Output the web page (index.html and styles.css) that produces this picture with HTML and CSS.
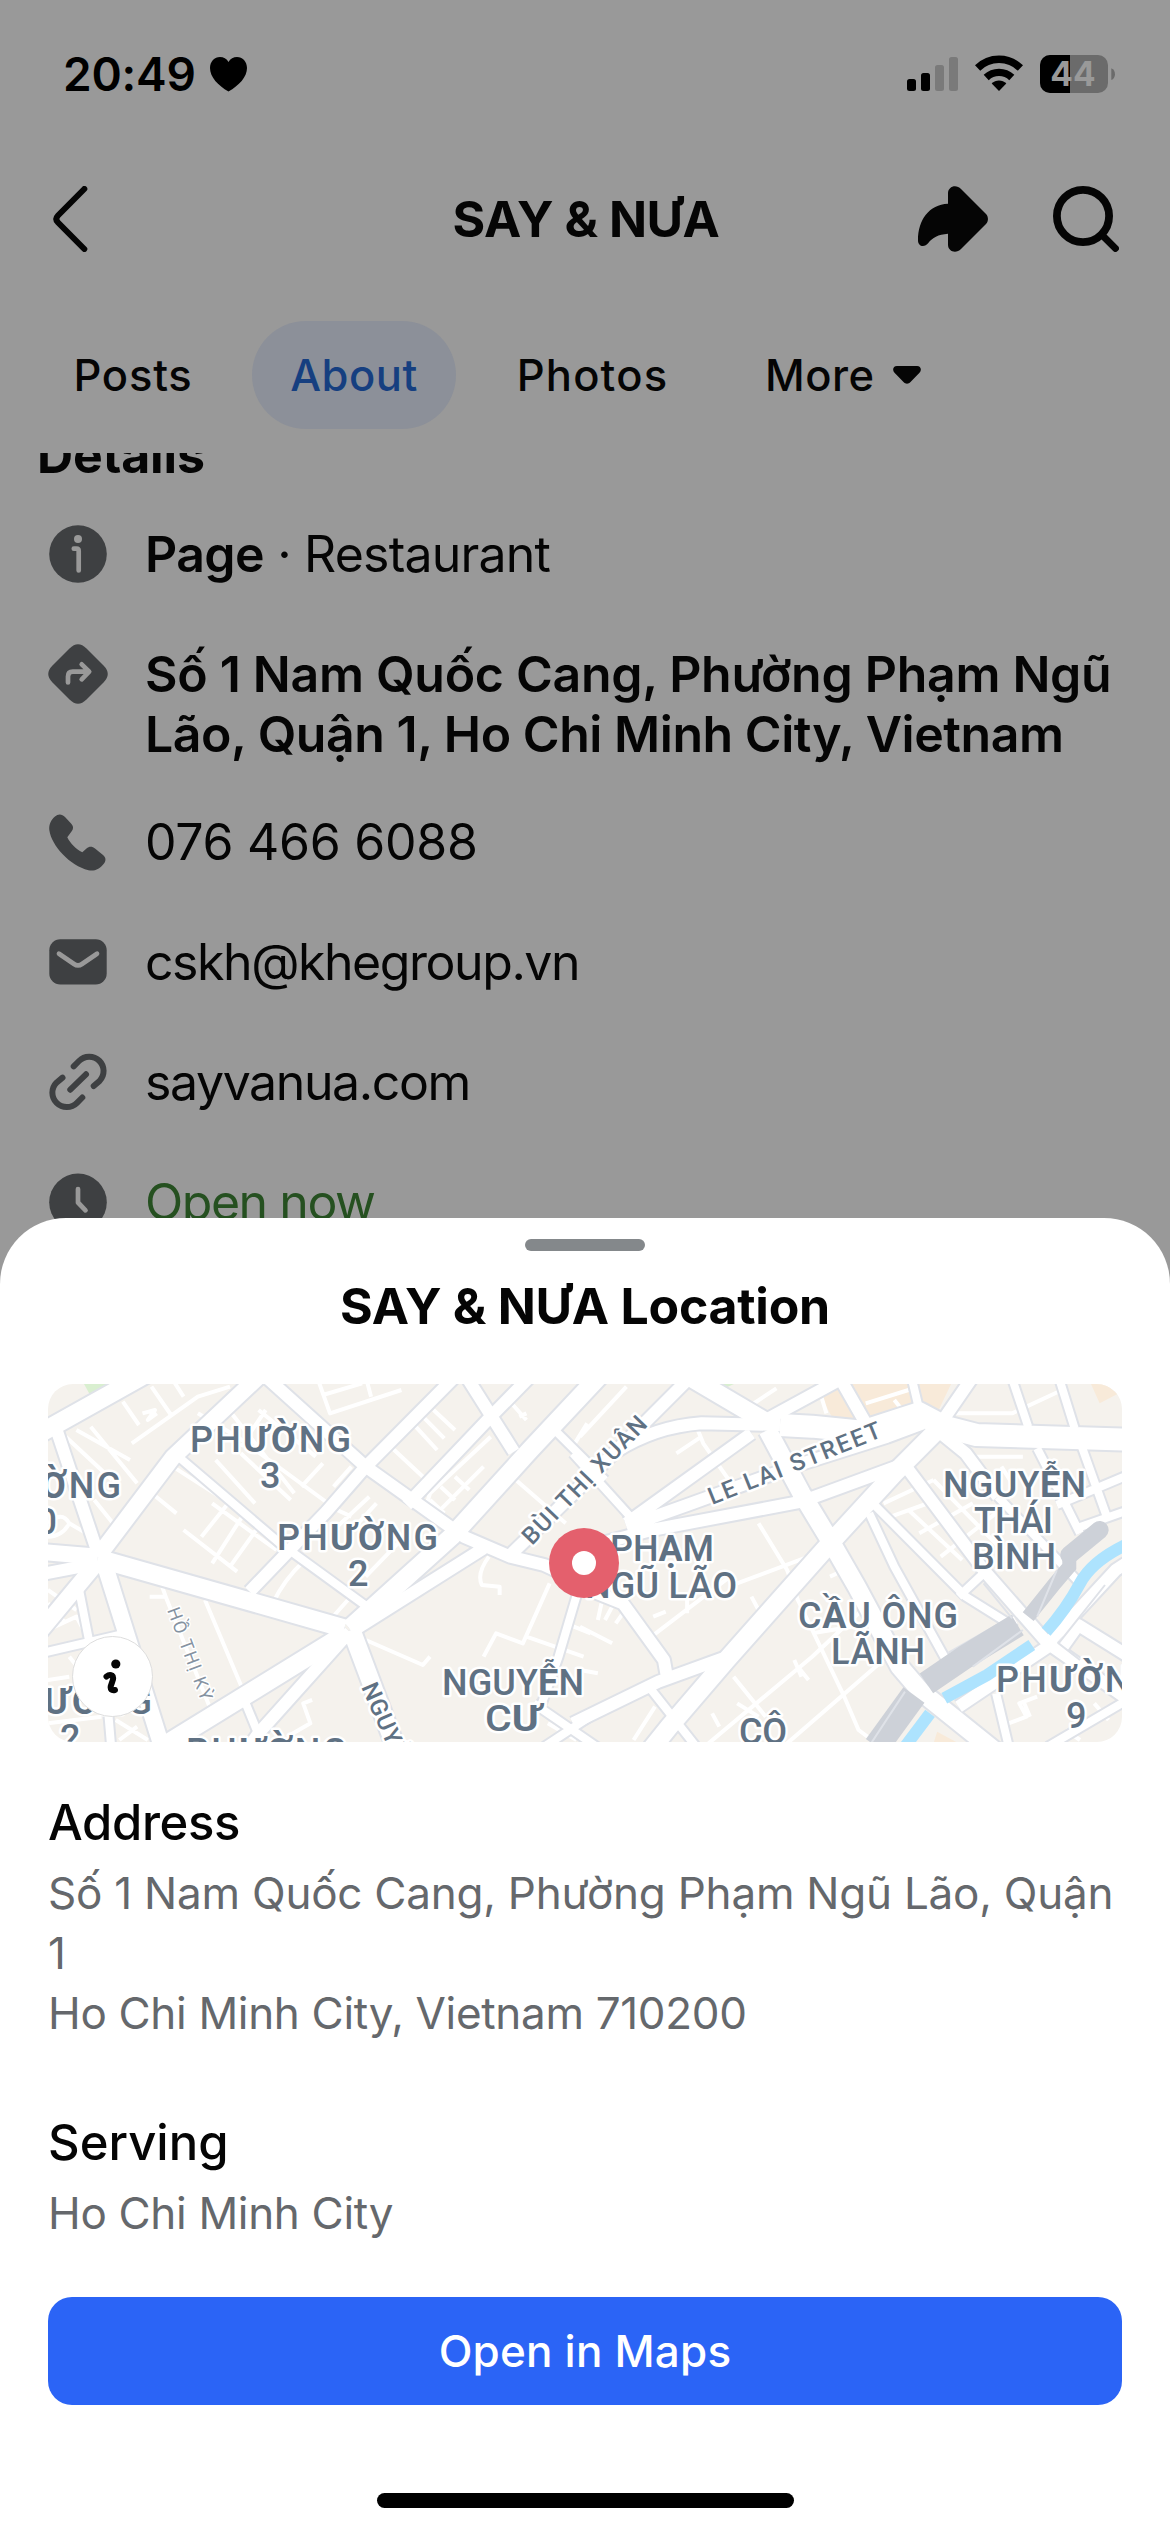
FILE: index.html
```html
<!DOCTYPE html>
<html lang="en">
<head>
<meta charset="utf-8">
<title>SAY &amp; NƯA</title>
<link rel="stylesheet" href="styles.css">
</head>
<body>
<div class="screen">
  <div class="page">
    <div class="status">
      <div class="status-left">
        <span class="time">20:49</span>
        <svg width="37" height="35" viewBox="0 0 37 35"><path d="M18.5 34.5C8 28.500 0 20 0 11C0 4.500 4.500 0 10 0C13.500 0 16.700 1.800 18.500 5C20.300 1.800 23.500 0 27 0C32.500 0 37 4.500 37 11C37 20 29 28.500 18.500 34.500Z"/></svg>
      </div>
      <div class="status-right">
        <svg width="51" height="38" viewBox="0 0 51 38"><rect y="24" width="9" height="12" rx="2.500"/><rect x="14" y="18" width="9" height="18" rx="2.500"/><rect x="28" y="10" width="9" height="26" rx="2.500" fill="#7a7a7a"/><rect x="42" y="2" width="9" height="34" rx="2.500" fill="#7a7a7a"/></svg>
        <svg width="48" height="38" viewBox="0 0 48 38"><path d="M2.600 13A30.500 30.500 0 0 1 45.400 13" fill="none" stroke="#000" stroke-width="7.500"/><path d="M11.200 22.500A18.500 18.500 0 0 1 36.800 22.500" fill="none" stroke="#000" stroke-width="7.300"/><path d="M16.700 28.600C20.500 24.300 27.500 24.300 31.300 28.600L24 36Z"/></svg>
        <svg width="75" height="38" viewBox="0 0 75 38"><rect width="68" height="38" rx="10" fill="#6b6b6b"/><path d="M30 0H10A10 10 0 0 0 0 10V28A10 10 0 0 0 10 38H30Z"/><path d="M71.300 13.300C76.200 15 76.200 23.500 71.300 25Z" fill="#6b6b6b"/><text x="33" y="31" class="battery">44</text></svg>
      </div>
    </div>
    <div class="header">
      <svg width="36" height="66" viewBox="0 0 36 66" fill="none" stroke="#050505" stroke-width="6" stroke-linecap="round"><path d="M31.300 3L5 29.500Q1.600 33 5 36.500L31.300 63"/></svg>
      <h1 class="header-title">SAY &amp; NƯA</h1>
      <div class="header-actions">
        <svg width="70" height="66" viewBox="0 0 70 66" fill="#050505"><path d="M30 17.700V7.300C30 .6 38-2.200 43 3L68 28C70.600 30.800 70.600 35.200 68 38L43 63C38 68 30 65.500 30 58.700V47.700C20 48.500 14.500 51.500 10.300 57C6.500 62 0 60.500 0 54.500C0 34 11 18.500 30 17.700Z"/></svg>
        <svg width="66" height="66" viewBox="0 0 66 66" fill="none" stroke="#050505" stroke-linecap="round"><circle cx="30" cy="30" r="26.100" stroke-width="7.800"/><path d="M51 51L62.400 62.400" stroke-width="7"/></svg>
      </div>
    </div>
    <nav class="tabs">
      <span class="tab tab-posts">Posts</span>
      <span class="tab tab-about">About</span>
      <span class="tab tab-photos">Photos</span>
      <span class="tab tab-more">More
        <svg width="28" height="18" viewBox="0 0 28 18"><path d="M4 0H24C28 0 29 4 26.500 6.800L17.500 16C15.500 18.200 12.500 18.200 10.500 16L1.500 6.800C-1 4 0 0 4 0Z" fill="#050505"/></svg>
      </span>
    </nav>
    <div class="details">
      <h2 class="details-title">Details</h2>
      <div class="rows">
        <div class="row">
          <svg class="icon" viewBox="0 0 60 60"><circle cx="30" cy="30" r="28.800"/><circle cx="30" cy="15" r="4" fill="#999"/><path class="cut" d="M25.800 24.700H28.500Q30.700 24.700 30.700 27V46.500"/></svg>
          <p class="text"><b class="page-kind">Page</b><span class="kind"> · Restaurant</span></p>
        </div>
        <div class="row row-address">
          <svg class="icon" viewBox="0 0 60 60"><path d="M21.500 4.500Q30-4 38.500 4.500L55.500 21.500Q64 30 55.500 38.500L38.500 55.500Q30 64 21.500 55.500L4.500 38.500Q-4 30 4.500 21.500Z"/><path class="cut" d="M20 38.500V32.500Q20 27.700 24.800 27.700H40.500M33.700 20.300L41.200 27.700L33.700 35.300"/></svg>
          <p class="text text-bold"><span class="addr-1">Số 1 Nam Quốc Cang, Phường Phạm Ngũ</span><br><span class="addr-2">Lão, Quận 1, Ho Chi Minh City, Vietnam</span></p>
        </div>
        <div class="row">
          <svg class="icon" viewBox="0 0 60 60"><path d="M7 4.500C10 1.600 14 1.600 17 5L23.500 12C25.800 14.700 25.400 17 23.500 19.500L19.300 25.300C22 31 28 37.500 34.300 40.300L38.500 36.500C41 34.400 44.200 34.200 47 36.500L55 43C58 45.500 58.200 48.500 56 51.500C52 57 46.500 59.500 40.500 58.300C22 53.500 3.500 34 1.300 18C.8 12.500 3 8 7 4.500Z"/></svg>
          <p class="text phone">076 466 6088</p>
        </div>
        <div class="row">
          <svg class="icon" viewBox="0 0 60 60"><rect x="1.300" y="7.200" width="57.400" height="45.200" rx="11"/><path class="cut" d="M11 21.700L26 32Q30 34.800 34 32L49 21.700"/></svg>
          <p class="text email">cskh@khegroup.vn</p>
        </div>
        <div class="row">
          <svg class="icon" viewBox="0 0 60 60"><path class="line" d="M25.700 14.300L31 9A14.300 14.300 0 0 1 51.500 29L45.700 34M34.300 45.500L29 50.800A14.300 14.300 0 0 1 8.500 30.600L14.500 25.600M22.300 37.700L38 22.300"/></svg>
          <p class="text site">sayvanua.com</p>
        </div>
        <div class="row">
          <svg class="icon" viewBox="0 0 60 60"><circle cx="30" cy="30.300" r="28.800"/><path class="cut" d="M30 17V30.500L37.500 38.300"/></svg>
          <p class="text open">Open now</p>
        </div>
      </div>
    </div>
  </div>

  <section class="sheet">
    <div class="grabber"></div>
    <h2 class="sheet-title">SAY &amp; NƯA Location</h2>
    <div class="map">
      <svg class="map-canvas" width="1074" height="358" viewBox="0 0 1074 358">
        <defs>
          <g id="roads">
            <g transform="translate(-18 -14) scale(.35714 .33333)">
              <path class="w20" d="M20 195L370 -15M190 565L880 775M895 775L1180 500L1400 240L1610 0M885 790L370 1130M900 780L1030 1150"/>
              <path class="w18" d="M190 560L400 262L640 20M205 570L375 1150M20 545L190 560M0 820L190 575"/>
              <path class="w14" d="M65 150L190 550M20 615L190 580M660 20L940 290L1215 500L1345 560L1440 585L1530 630M1190 20L940 290L830 425L615 665M900 785L1270 535M895 785L640 1090L600 1150M1222 20L1355 245M1400 20L1290 140L1055 405M1340 560L1580 310"/>
              <path class="w10" d="M410 255L700 520L950 715M1455 165L1610 330M1535 660L1480 860L1430 1010M30 850L250 795M132 630L165 810M600 990L650 1120M205 850L228 1140M1410 1000L1600 1140M1610 1010L1440 1130"/>
            </g>
            <g transform="translate(532 -14) scale(.35714 .33333)">
              <path class="w22" d="M560 165L650 170L790 185L950 130L1020 170L1110 195L1560 210"/>
              <path class="w20" d="M290 10L520 155M525 180L620 370L705 520L775 650L895 890L955 965L1170 1150M1010 170L880 310L700 520L410 870L250 1070L190 1150"/>
              <path class="w14" d="M-20 370L170 170L310 20M100 245Q210 170 340 160L560 165M130 460L480 190M130 470L300 405L610 285L860 200L960 160M60 520L200 480L620 395L900 285L1000 180M-20 1060L220 935L400 865M-20 640L120 700L235 870L245 930M920 300L1130 600L1310 820L1590 1030M1100 20L1010 160M520 150L760 10"/>
              <path class="w14" d="M1310 820L1500 600L1580 545M1310 830L1060 1010M1345 840L1395 765L1590 895M1000 180L1080 250L1170 380M720 10L800 160"/>
              <path class="w10" d="M-20 250L145 445M1208 20L1255 170M1340 20L1385 175M1280 235L1335 350L1400 490M1405 230L1475 440M1335 405L1590 290M1390 475L1590 400M810 430L880 590L1025 870M820 400L1080 680L1200 760M1060 680L1140 600M1165 970L1205 1150M200 960L340 1150M1040 860L1220 750M1170 380L1400 640M930 30L950 120M1310 1130L1580 960"/>
            </g>
          </g>
        </defs>
        <rect width="1074" height="358" fill="#f5f2ed"/>
        <g transform="translate(-18 -14) scale(.35714 .33333)">
          <path d="M145 30H260L175 88Z" fill="#d9efd0"/>
          <path class="alley" d="M260 95L305 165M285 220L470 80L560 50M340 50L395 135M400 30L430 80M315 130L350 120L330 150L355 130M470 130L580 200L860 420L900 440M550 110L740 370M640 120L800 260M520 270L630 400M590 250L730 390M660 120L590 230M820 280L760 350M900 290L850 350M100 200L230 330M130 180L280 270M170 170L300 340M180 390L240 470M330 360L410 430M400 290L560 400L690 520M510 400L690 540M430 480L580 605M555 400L480 500M600 430L510 580M640 470L560 590M810 40L840 130L1040 60M820 75L930 40M945 40L955 80M1080 170L1140 240M1100 140L1160 205M1130 120L1190 180M1010 230L1110 330M1290 200L1120 370L1100 440M1270 290L1130 440M1190 320L1230 360M1120 390L1160 430M1150 350L1190 390M1350 320L1500 460M1560 160L1520 230M1340 90L1390 150M1390 130L1370 140M950 380L860 470M970 400L910 470M1030 520L940 620M770 570Q710 630 680 700M890 690L840 750M370 650L380 680L335 680M380 680L510 1030M490 690L600 970M940 810L1100 885L1120 860M1270 860L1305 790L1380 820L1455 640M1285 560Q1250 610 1265 645L1315 650V675M1390 800L1550 860M1500 760L1570 790M790 990L765 1000L785 1060L720 1100M50 460Q90 420 110 460Q90 500 50 500M110 460L190 510M50 660L130 720M50 700L100 760M50 780L130 740L150 780M110 860L140 900M50 930L110 920M50 1060L200 1040M240 1050L330 1110M250 1110L300 1070M1450 1060L1530 1110"/>
        </g>
        <g transform="translate(532 -14) scale(.35714 .33333)">
          <path d="M670 40H1040L1000 130L945 105L820 150H710L680 90ZM1430 40H1470L1505 72L1455 100ZM785 205L905 185L900 205L805 240ZM1000 1085L1060 1120H990Z" fill="#f8ead9"/>
          <path d="M385 40H435L405 55Z" fill="#d9efd0"/>
          <path class="alley" d="M0 200L130 50M270 250L340 200M330 180L345 220L430 350M480 105L550 55M670 60L690 130M800 100L920 60M880 90L910 130M1050 130H1210L1350 60M1100 260H1240M1240 100L1230 130M500 460L580 600L610 690L740 980L780 1080L830 1120M440 640L640 560M360 1120L650 860L820 690M580 1120L860 860M200 800L420 620M370 1030L390 1070M440 1000L500 1040M430 920L520 1040M480 680L500 720M610 890L640 930M600 870L620 920M60 700L50 750M90 710L70 750M120 730L100 760M205 740L240 725M300 690V730M0 770L90 820M0 900L50 910M210 1010L150 1110M920 420L1070 570M850 400L990 330M870 440L1000 390M990 330L1200 560M950 490L1100 400M1010 560L1200 400M1180 290L1210 340M1200 1060L1250 1040L1230 1000L1280 980M1260 1040L1240 990M1360 1080L1400 1110M1440 1000L1480 1050M650 790L760 770M700 620L740 600"/>
        </g>
        <use href="#roads" class="casing"/>
        <use href="#roads" class="fill"/>
        <g transform="translate(532 -14) scale(.35714 .33333)" fill="none">
          <path d="M1370 545V590L1330 640L1255 740" class="bank b15"/>
          <path d="M1455 480L1370 555" class="bank b18 round"/>
          <path d="M1225 765L1080 860L970 940" class="bank b24"/>
          <path d="M935 975L830 1130" class="bank b26"/>
          <path d="M1570 505Q1440 560 1400 640T1305 785M1265 825L1140 915L1020 985M980 1030L910 1130" class="river"/>
          <path d="M1335 600L1280 740M1240 780L1100 890M1130 640L1210 745M1470 645L1340 820L1400 870M910 965L815 1120" class="rail"/>
        </g>
        <g class="big">
          <text x="142" y="67.700" textLength="161">PH<tspan>ƯỜ</tspan>NG</text>
          <text x="212" y="103.700">3</text>
          <text x="-88" y="113.700" textLength="161">PH<tspan>ƯỜ</tspan>NG</text>
          <text x="-32" y="150">10</text>
          <text x="229" y="166" textLength="161">PH<tspan>ƯỜ</tspan>NG</text>
          <text x="300" y="202">2</text>
          <text x="-57" y="330" textLength="161">PH<tspan>ƯỜ</tspan>NG</text>
          <text x="12" y="366">2</text>
          <text x="138" y="379.500" textLength="161">PH<tspan>ƯỜ</tspan>NG</text>
          <text x="394" y="311" textLength="142">NGUY<tspan>Ễ</tspan>N</text>
          <text x="437" y="347" textLength="56" lengthAdjust="spacingAndGlyphs">C<tspan>Ư</tspan></text>
          <text x="562" y="177" textLength="104">PH<tspan>Ạ</tspan>M</text>
          <text x="537" y="213.500" textLength="152">NGŨ LÃO</text>
          <text x="750" y="243.500" textLength="160">C<tspan>Ầ</tspan>U ÔNG</text>
          <text x="783" y="280" textLength="94">LÃNH</text>
          <text x="895" y="112.500" textLength="143">NGUY<tspan>Ễ</tspan>N</text>
          <text x="926" y="148.500" textLength="79">THÁI</text>
          <text x="924" y="185" textLength="84">BÌNH</text>
          <text x="948" y="307.700" textLength="161">PH<tspan>ƯỜ</tspan>NG</text>
          <text x="1018" y="344">9</text>
          <text x="691" y="359.500" textLength="48">CÔ</text>
        </g>
        <g class="small">
          <text transform="translate(484 162) rotate(-46)" textLength="168">BÙI THỊ XUÂN</text>
          <text transform="translate(664 121) rotate(-21.800)" textLength="184">LE LAI STREET</text>
          <text transform="translate(313 303) rotate(66)" textLength="215">NGUYỄN CƯ TRINH</text>
          <text transform="translate(119 226) rotate(69.500)" textLength="98" class="tiny">HỒ THỊ KỲ</text>
        </g>
        <circle cx="536" cy="179" r="35" fill="#e4606d"/>
        <circle cx="536" cy="179" r="12" fill="#fff"/>
      </svg>
      <span class="map-info">
        <svg width="20" height="36" viewBox="0 0 20 36"><circle cx="12.800" cy="5" r="4.600"/><path d="M3.500 17.500Q6.500 15 9 16.500Q11 18 9.500 22L7.800 27Q6.800 32 12 31" fill="none" stroke="#050505" stroke-width="6" stroke-linecap="round"/></svg>
      </span>
    </div>
    <h3 class="label label-address">Address</h3>
    <p class="value">Số 1 Nam Quốc Cang, Phường Phạm Ngũ Lão, Quận<br>1<br><span class="city-line">Ho Chi Minh City, Vietnam 710200</span></p>
    <h3 class="label label-serving">Serving</h3>
    <p class="value city-line">Ho Chi Minh City</p>
    <div class="button">Open in Maps</div>
    <div class="home"></div>
  </section>
</div>
</body>
</html>
```
FILE: styles.css
```css
* { box-sizing: border-box; }

body {
  margin: 0;
  background: #999;
  font-family: Inter, "Liberation Sans", sans-serif;
  color: #050505;
}

h1, h2, h3, p { margin: 0; }
svg { display: block; flex: none; }

.screen { width: 1170px; height: 2532px; overflow: hidden; }

/* dimmed page behind the sheet */
.page { height: 1290px; overflow: hidden; background: #999; }

.status {
  height: 148px;
  padding: 0 55px 0 63px;
  display: flex;
  align-items: center;
  justify-content: space-between;
  color: #000;
}
.status-left { display: flex; align-items: center; gap: 14px; }
.status-right { display: flex; gap: 17px; }
.time { font-size: 46px; line-height: 60px; font-weight: 600; letter-spacing: -.2px; }
.battery { font-size: 33.5px; font-weight: 700; fill: #999; text-anchor: middle; }

.header {
  height: 142px;
  padding: 0 51px 0 53px;
  display: grid;
  grid-template-columns: 1fr auto 1fr;
  align-items: center;
}
.header-title { font-size: 50px; line-height: 60px; font-weight: 700; letter-spacing: -.48px; }
.header-actions { display: flex; justify-content: flex-end; gap: 65px; }

.tabs { margin-top: 31px; padding: 0 38px; display: flex; gap: 24px; }
.tab {
  height: 108px;
  border-radius: 54px;
  display: flex;
  align-items: center;
  justify-content: center;
  font-size: 43.5px;
  font-weight: 550;
  letter-spacing: .8px;
}
.tab-posts { width: 190px; }
.tab-about { width: 204px; background: #8c9099; color: #163f80; letter-spacing: .5px; }
.tab-photos { width: 225px; letter-spacing: 1.2px; }
.tab-more { padding-left: 36px; gap: 18px; letter-spacing: .5px; }

.details { margin-top: 24px; overflow: hidden; }
.details-title {
  margin: -28px 0 0 37px;
  font-size: 50px;
  line-height: 60px;
  font-weight: 700;
  letter-spacing: -.1px;
}
.rows { margin-top: 39px; padding: 0 48px; display: flex; flex-direction: column; gap: 60px; }
.row { display: flex; gap: 37px; }
.row-address { margin-bottom: -12px; }
.icon { width: 60px; height: 60px; fill: #3e4042; }
.icon .cut { fill: none; stroke: #999; stroke-width: 4.7px; stroke-linecap: round; stroke-linejoin: round; }
.icon .line { fill: none; stroke: #3e4042; stroke-width: 6px; stroke-linecap: round; }
.text { font-size: 50px; line-height: 60px; white-space: pre; }
.text-bold { font-weight: 600; }
.page-kind { font-weight: 600; letter-spacing: -.6px; }
.kind { letter-spacing: -.8px; }
.addr-1 { letter-spacing: -.29px; }
.addr-2 { letter-spacing: -.455px; }
.phone { letter-spacing: -.27px; }
.email { letter-spacing: -1.45px; }
.site { letter-spacing: -1.4px; }
.open { letter-spacing: -1.46px; color: #255020; }

/* bottom sheet */
.sheet {
  position: relative;
  height: 1314px;
  margin-top: -72px;
  padding: 21px 48px 0;
  background: #fff;
  border-radius: 66px 66px 0 0;
}
.grabber { width: 120px; height: 12px; margin: 0 auto; border-radius: 6px; background: #84888b; }
.sheet-title {
  margin-top: 25px;
  font-size: 50px;
  line-height: 60px;
  font-weight: 700;
  letter-spacing: -.26px;
  text-align: center;
}

.map { position: relative; height: 358px; margin-top: 48px; border-radius: 25px; overflow: hidden; }
.map-canvas path { vector-effect: non-scaling-stroke; }
.map-canvas .alley { fill: none; stroke: #fff; stroke-width: 4px; stroke-linejoin: round; }
.casing, .fill { fill: none; stroke-linejoin: round; --extra: 0px; stroke: #fff; }
.casing { --extra: 4px; stroke: #dfe2e8; }
.w22 { stroke-width: calc(22px + var(--extra)); }
.w20 { stroke-width: calc(18px + var(--extra)); }
.w18 { stroke-width: calc(16px + var(--extra)); }
.w14 { stroke-width: calc(12px + var(--extra)); }
.w10 { stroke-width: calc(8px + var(--extra)); }
.bank { stroke: #cdd1d8; }
.b15 { stroke-width: 14px; }
.b18 { stroke-width: 18px; }
.b24 { stroke-width: 24px; }
.b26 { stroke-width: 26px; }
.round { stroke-linecap: round; }
.river { stroke: #ade3fe; stroke-width: 12px; }
.rail { stroke: #dfe2e8; stroke-width: 2px; }
.big, .small {
  font-family: Roboto, sans-serif;
  fill: #5f7183;
  stroke: #fff;
  stroke-width: 5px;
  stroke-linejoin: round;
  paint-order: stroke;
}
.big { font-size: 36px; font-weight: 500; }
.big tspan { font-weight: 700; }
.small { font-size: 24px; font-weight: 500; }
.small .tiny { font-size: 18px; font-weight: 400; fill: #8592a1; stroke-width: 3px; }
.map-info {
  position: absolute;
  left: 24px;
  bottom: 25px;
  width: 81px;
  height: 81px;
  border: 1px solid #ddd;
  border-radius: 50%;
  background: #fff;
  display: flex;
  align-items: center;
  justify-content: center;
}
.map-info svg { fill: #050505; }

.label { font-size: 49px; line-height: 60px; font-weight: 500; }
.label-address { margin-top: 51px; letter-spacing: -.35px; }
.label-serving { margin-top: 70px; }
.value {
  margin-top: 10px;
  font-size: 44px;
  line-height: 60px;
  letter-spacing: -.23px;
  color: #65686c;
  white-space: nowrap;
}
.city-line { letter-spacing: -.32px; }
.button {
  height: 108px;
  margin-top: 54px;
  border-radius: 24px;
  background: #2b64f6;
  color: #fff;
  display: flex;
  align-items: center;
  justify-content: center;
  font-size: 44px;
  font-weight: 550;
  letter-spacing: .2px;
}
.home { width: 417px; height: 15px; margin: 88px auto 0; border-radius: 8px; background: #000; }
```
